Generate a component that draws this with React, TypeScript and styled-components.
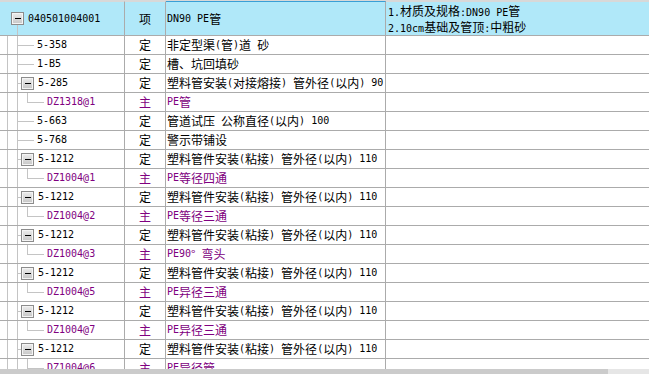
import React from "react";
import styled, { createGlobalStyle } from "styled-components";

const GlobalStyle = createGlobalStyle`
  html, body {
    margin: 0;
    padding: 0;
    background: #ffffff;
    overflow: hidden;
  }
`;

interface Row {
  code: string;
  kind: string;
  name: string;
  level: 1 | 2;
  box?: boolean;
}

const rows: Row[] = [
  { code: "5-358", kind: "定", name: "非定型渠(管)道 砂", level: 1 },
  { code: "1-B5", kind: "定", name: "槽、坑回填砂", level: 1 },
  { code: "5-285", kind: "定", name: "塑料管安装(对接熔接) 管外径(以内) 90", level: 1, box: true },
  { code: "DZ1318@1", kind: "主", name: "PE管", level: 2 },
  { code: "5-663", kind: "定", name: "管道试压 公称直径(以内) 100", level: 1 },
  { code: "5-768", kind: "定", name: "警示带铺设", level: 1 },
  { code: "5-1212", kind: "定", name: "塑料管件安装(粘接) 管外径(以内) 110", level: 1, box: true },
  { code: "DZ1004@1", kind: "主", name: "PE等径四通", level: 2 },
  { code: "5-1212", kind: "定", name: "塑料管件安装(粘接) 管外径(以内) 110", level: 1, box: true },
  { code: "DZ1004@2", kind: "主", name: "PE等径三通", level: 2 },
  { code: "5-1212", kind: "定", name: "塑料管件安装(粘接) 管外径(以内) 110", level: 1, box: true },
  { code: "DZ1004@3", kind: "主", name: "PE90° 弯头", level: 2 },
  { code: "5-1212", kind: "定", name: "塑料管件安装(粘接) 管外径(以内) 110", level: 1, box: true },
  { code: "DZ1004@5", kind: "主", name: "PE异径三通", level: 2 },
  { code: "5-1212", kind: "定", name: "塑料管件安装(粘接) 管外径(以内) 110", level: 1, box: true },
  { code: "DZ1004@7", kind: "主", name: "PE异径三通", level: 2 },
  { code: "5-1212", kind: "定", name: "塑料管件安装(粘接) 管外径(以内) 110", level: 1, box: true },
  { code: "DZ1004@6", kind: "主", name: "PE异径管", level: 2 },
];

const GRID = "#ababab";
const TREE = "#c4c4c4";

const Page = styled.div`
  width: 649px;
  height: 386px;
  display: flex;
  flex-direction: column;
  border-top: 1px solid #d8d8d8;
  box-sizing: border-box;
`;

const GridArea = styled.div`
  height: 368px;
  overflow: hidden;
`;

const Table = styled.div`
  display: grid;
  grid-template-columns: 125px 41px 220px 1fr;
`;

const Cell = styled.div<{ $head?: boolean; $selected?: boolean; $last?: boolean; $main?: boolean }>`
  position: relative;
  box-sizing: border-box;
  height: ${(p) => (p.$head ? "35px" : "19px")};
  border-top: ${(p) => (p.$head ? `1px solid ${p.$selected ? "#3a9fd6" : "#d8d8d8"}` : "none")};
  border-bottom: 1px solid ${GRID};
  border-right: ${(p) => (p.$last ? "none" : `1px solid ${GRID}`)};
  background: ${(p) => (p.$head ? "#b0e8f9" : "#ffffff")};
  color: ${(p) => (p.$main ? "#800080" : "#000000")};
  font-family: "Noto Sans CJK SC", sans-serif;
  font-size: 12px;
  line-height: 18px;
  white-space: nowrap;
  overflow: hidden;
  display: flex;
  align-items: center;
`;

const CodeCell = styled(Cell)<{ $indent: number }>`
  padding-left: ${(p) => p.$indent}px;
`;

const KindCell = styled(Cell)`
  justify-content: center;
`;

const NameCell = styled(Cell)`
  padding-left: 1px;
`;

const NoteCell = styled(Cell)`
  padding-left: 2px;
  padding-top: 2px;
  flex-direction: column;
  align-items: flex-start;
  justify-content: center;
  line-height: 14px;
`;

const Latin = styled.span`
  font-family: "DejaVu Sans Mono", monospace;
  font-size: 10px;
  white-space: pre;
`;

const Cjk = styled.span`
  font-family: "Noto Sans CJK SC", sans-serif;
  font-size: 12px;
`;

const ExpandBox = styled.span`
  position: relative;
  z-index: 1;
  box-sizing: border-box;
  width: 13px;
  height: 13px;
  margin-right: 4px;
  flex: none;
  border: 1px solid #8c8c8c;
  box-shadow: inset 0 0 0 1px #f4f4f4;
  background: linear-gradient(#ececec, #c6c6c6);
  display: flex;
  align-items: center;
  justify-content: center;
  &::after {
    content: "";
    width: 6px;
    height: 1px;
    background: #000;
  }
`;

const Guides = styled.svg`
  position: absolute;
  left: 0;
  top: 0;
  pointer-events: none;
`;

const ScrollBar = styled.div`
  height: 17px;
  background: #e6e6e6;
  display: flex;
`;

const Thumb = styled.div`
  width: 608px;
  background: #cbcbcb;
`;

const Text: React.FC<{ value: string }> = ({ value }) => (
  <>
    {value
      .split(/([\x20-\x7e]+)/)
      .filter((s) => s.length > 0)
      .map((s, i) =>
        /^[\x20-\x7e]+$/.test(s) ? <Latin key={i}>{s}</Latin> : <Cjk key={i}>{s}</Cjk>
      )}
  </>
);

const TreeLines: React.FC<{ row: Row }> = ({ row }) => (
  <Guides width="60" height="18">
    <line x1="7.5" y1="0" x2="7.5" y2="18" stroke={TREE} />
    <line x1="17.5" y1="0" x2="17.5" y2="18" stroke={TREE} />
    {row.level === 1 ? (
      <line x1="17" y1="9.5" x2={row.box ? 22 : 34} y2="9.5" stroke={TREE} />
    ) : (
      <>
        <line x1="27.5" y1="0" x2="27.5" y2="9.5" stroke={TREE} />
        <line x1="27" y1="9.5" x2="44" y2="9.5" stroke={TREE} />
      </>
    )}
  </Guides>
);

const App: React.FC = () => {
  return (
    <>
      <GlobalStyle />
      <Page>
        <GridArea>
          <Table>
            <CodeCell $head $indent={11}>
              <Guides width="30" height="33">
                <line x1="17.5" y1="22" x2="17.5" y2="33" stroke={TREE} />
              </Guides>
              <ExpandBox />
              <Text value="040501004001" />
            </CodeCell>
            <KindCell $head>
              <Cjk>项</Cjk>
            </KindCell>
            <NameCell $head $selected>
              <Text value="DN90 PE管" />
            </NameCell>
            <NoteCell $head $last>
              <div>
                <Text value="1.材质及规格:DN90 PE管" />
              </div>
              <div>
                <Text value="2.10cm基础及管顶:中粗砂" />
              </div>
            </NoteCell>

            {rows.map((row, i) => {
              const main = row.kind === "主";
              const indent = row.level === 2 ? 47 : row.box ? 21 : 37;
              return (
                <React.Fragment key={i}>
                  <CodeCell $indent={indent} $main={main}>
                    <TreeLines row={row} />
                    {row.box && <ExpandBox />}
                    <Text value={row.code} />
                  </CodeCell>
                  <KindCell $main={main}>
                    <Cjk>{row.kind}</Cjk>
                  </KindCell>
                  <NameCell $main={main}>
                    <Text value={row.name} />
                  </NameCell>
                  <Cell $last />
                </React.Fragment>
              );
            })}
          </Table>
        </GridArea>
        <ScrollBar>
          <Thumb />
        </ScrollBar>
      </Page>
    </>
  );
};

export default App;
